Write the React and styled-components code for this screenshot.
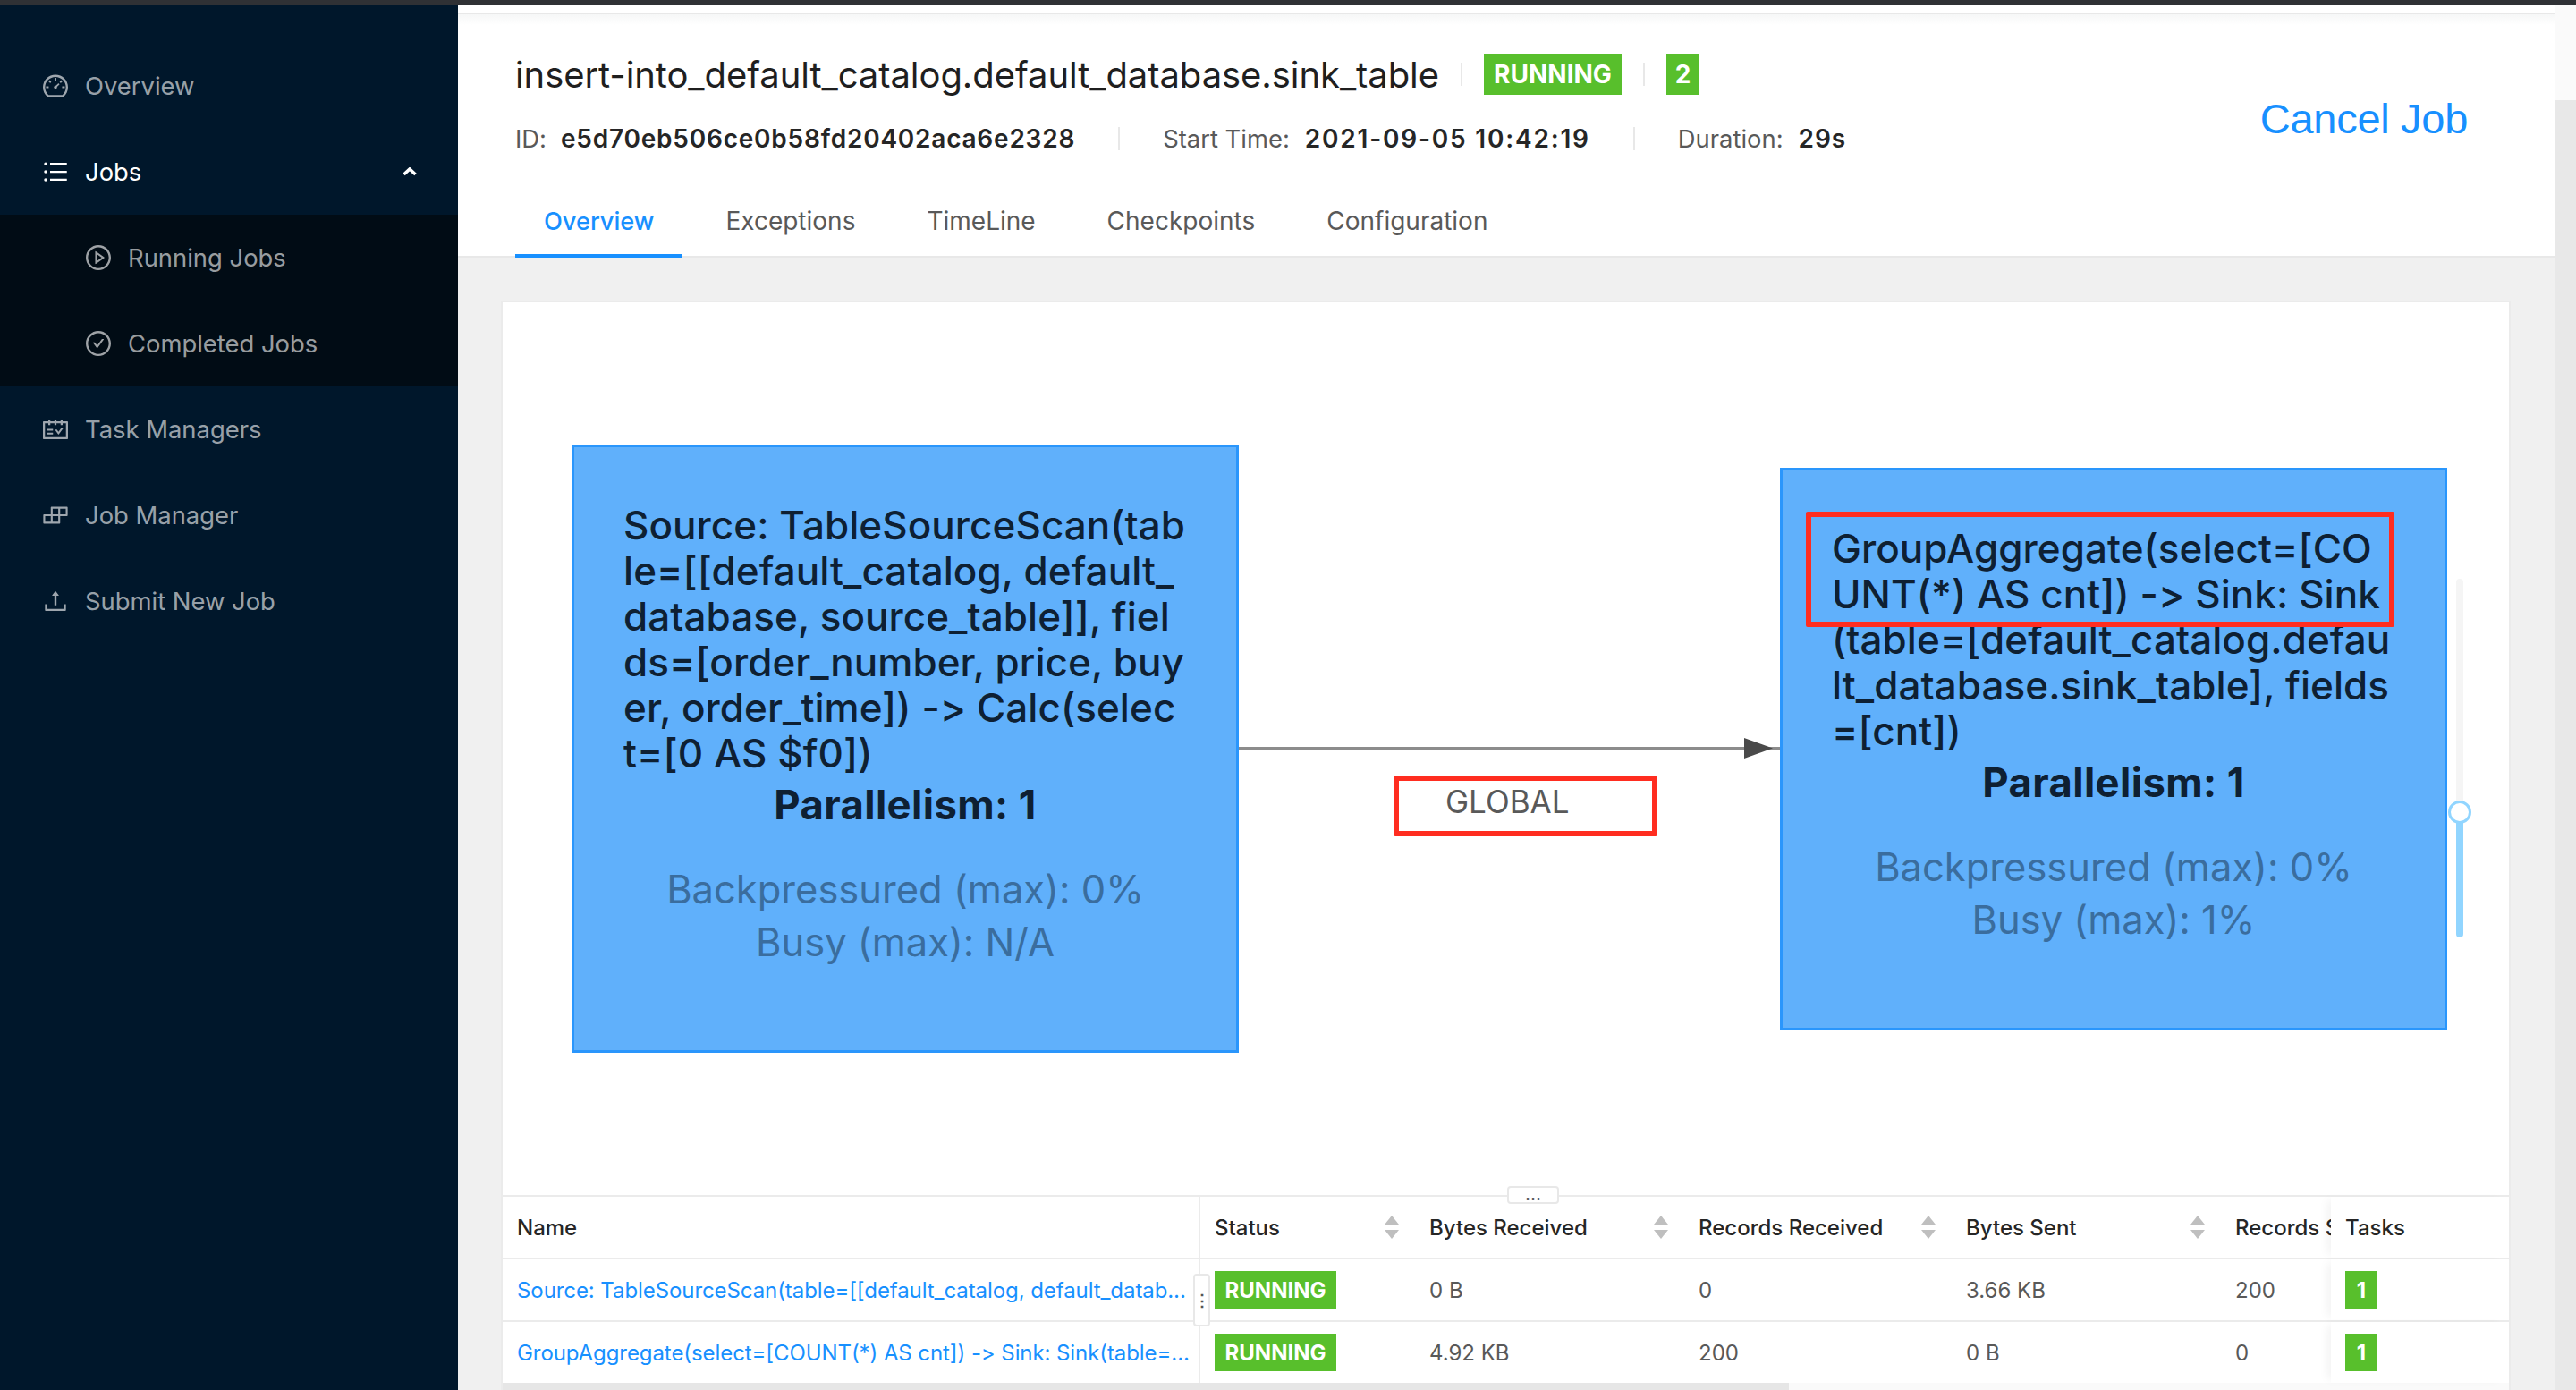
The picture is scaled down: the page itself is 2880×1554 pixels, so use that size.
import React from 'react';
import styled, { createGlobalStyle } from 'styled-components';
import {
  AiOutlineDashboard,
  AiOutlineUnorderedList,
  AiOutlinePlayCircle,
  AiOutlineCheckCircle,
  AiOutlineSchedule,
  AiOutlineBuild,
  AiOutlineUpload,
} from 'react-icons/ai';

const GlobalStyle = createGlobalStyle`
  html, body {
    margin: 0;
    padding: 0;
    height: 100%;
    overflow: hidden;
    background: #f0f0f0;
    font-family: Inter, "Liberation Sans", sans-serif;
    font-variant-ligatures: none;
    font-feature-settings: "calt" 0;
  }
  * {
    box-sizing: border-box;
  }
`;

const Page = styled.div`
  width: 2880px;
  height: 1554px;
  display: flex;
  flex-direction: column;
  overflow: hidden;
`;

const TopBar = styled.div`
  height: 6px;
  flex: none;
  background: #2f3135;
`;

const Body = styled.div`
  flex: 1;
  min-height: 0;
  display: flex;
`;

// sidebar

const Sidebar = styled.nav`
  width: 512px;
  flex: none;
  padding-top: 42px;
  background: #00172b;
`;

const MenuItem = styled.div`
  height: 96px;
  display: flex;
  align-items: center;
  gap: 17px;
  padding: 0 46px 0 ${(p) => (p.$sub ? 94 : 46)}px;
  font-size: 27.4px;
  color: ${(p) => (p.$active ? '#fff' : 'rgba(255, 255, 255, 0.62)')};
  svg {
    flex: none;
  }
`;

const MenuLabel = styled.span`
  flex: 1;
`;

const SubMenu = styled.div`
  background: #010c15;
`;

const ChevronUp = () => (
  <svg width="16" height="10" viewBox="0 0 16 10" fill="none">
    <polyline points="1.5,8 8,2 14.5,8" stroke="#fff" strokeWidth="3.6" />
  </svg>
);

// main column

const Main = styled.main`
  flex: 1;
  min-width: 0;
  display: flex;
  flex-direction: column;
`;

const HeaderStrip = styled.div`
  height: 10px;
  flex: none;
  background: #fff;
  border-bottom: 2px solid #e8e8e8;
`;

const Header = styled.header`
  flex: none;
  background: linear-gradient(#f6f7f7, #fff 12px);
  box-shadow: inset 0 -2px 0 #e8e8e8;
`;

const HeaderTop = styled.div`
  display: flex;
  justify-content: space-between;
  padding: 44px 97px 0 64px;
`;

const TitleRow = styled.div`
  height: 46px;
  display: flex;
  align-items: center;
`;

const Title = styled.h1`
  margin: 0;
  font-size: 40px;
  font-weight: 400;
  color: #1f1f1f;
  letter-spacing: -0.07px;
`;

const Divider = styled.span`
  width: 2px;
  height: ${(p) => p.$h || 26}px;
  margin: 0 ${(p) => p.$gap || 24}px;
  background: #e8e8e8;
`;

const Badge = styled.span`
  display: inline-flex;
  align-items: center;
  justify-content: center;
  background: #58bf2c;
  color: #fff;
  font-weight: 700;
  font-size: ${(p) => (p.$large ? 28 : 24)}px;
  height: ${(p) => (p.$large ? 46 : 42)}px;
  width: ${(p) => p.$w}px;
`;

const MetaRow = styled.div`
  height: 42px;
  margin-top: 28px;
  display: flex;
  align-items: center;
`;

const MetaLabel = styled.span`
  font-size: 27.4px;
  color: #595959;
  margin-right: ${(p) => p.$gap}px;
`;

const MetaValue = styled.span`
  font-size: 28px;
  font-weight: 600;
  color: #262626;
  letter-spacing: ${(p) => p.$spacing}px;
`;

const CancelLink = styled.a`
  margin-top: 45px;
  font-family: 'Liberation Sans', sans-serif;
  font-size: 47px;
  line-height: 56px;
  letter-spacing: -0.3px;
  color: #1890ff;
`;

const Tabs = styled.div`
  margin-top: 28px;
  padding-left: 64px;
  display: flex;
  gap: 16px;
`;

const Tab = styled.div`
  height: 84px;
  padding: 6px 32px 0;
  display: flex;
  align-items: center;
  font-size: ${(p) => (p.$active ? 27.2 : 28)}px;
  font-weight: ${(p) => (p.$active ? 500 : 400)};
  color: ${(p) => (p.$active ? '#1890ff' : '#595959')};
  border-bottom: 4px solid ${(p) => (p.$active ? '#1890ff' : 'transparent')};
`;

const Content = styled.div`
  flex: 1;
  min-height: 0;
  padding: 48px 49px 0 48px;
  background: #f0f0f0;
`;

const Card = styled.section`
  height: 100%;
  display: flex;
  flex-direction: column;
  background: #fff;
  border: 2px solid #ebebeb;
  border-bottom: 0;
  border-radius: 2px 2px 0 0;
`;

// plan graph

const Graph = styled.div`
  position: relative;
  flex: 1;
  min-height: 0;
`;

const PlanNode = styled.div`
  position: absolute;
  left: ${(p) => p.$left}px;
  top: ${(p) => p.$top}px;
  width: 746px;
  height: ${(p) => p.$height}px;
  padding: 62px 0 0 55px;
  background: #60b0fb;
  border: 3px solid #2a96fc;
`;

const NodeLine = styled.div`
  font-size: 44px;
  font-weight: 500;
  line-height: 51px;
  letter-spacing: 0.05px;
  white-space: pre;
  color: #0e2033;
`;

const NodeBlock = styled.div`
  margin-left: -55px;
  text-align: center;
`;

const NodeParallelism = styled(NodeBlock)`
  margin-top: 6px;
  font-size: 45.4px;
  line-height: 51px;
  font-weight: 700;
  letter-spacing: 0.4px;
  color: #0e2033;
`;

const NodeStats = styled(NodeBlock)`
  margin-top: 40px;
  font-size: 43.5px;
  line-height: 59px;
  color: #3a6d9e;
`;

const EdgeSvg = styled.svg`
  position: absolute;
  left: 823px;
  top: 486px;
`;

const Callout = styled.div`
  position: absolute;
  left: ${(p) => p.$left}px;
  top: ${(p) => p.$top}px;
  width: ${(p) => p.$w}px;
  height: ${(p) => p.$h}px;
  border: 6px solid #ff2d20;
  border-radius: 2px;
`;

const EdgeLabel = styled.span`
  display: block;
  padding-left: 52px;
  font-size: 35px;
  line-height: 46px;
  color: #595959;
`;

const ZoomSlider = styled.div`
  position: absolute;
  left: 2184px;
  top: 309px;
  width: 8px;
  height: 401px;
  border-radius: 4px;
  background: #f5f5f5;
`;

const ZoomFill = styled.div`
  position: absolute;
  left: 0;
  right: 0;
  bottom: 0;
  height: 140px;
  border-radius: 0 0 4px 4px;
  background: #91d5ff;
`;

const ZoomHandle = styled.div`
  position: absolute;
  left: -9px;
  bottom: 127px;
  width: 26px;
  height: 26px;
  border-radius: 50%;
  background: #fff;
  border: 3px solid #91d5ff;
`;

// vertex table

const TableWrap = styled.div`
  position: relative;
  flex: none;
`;

const Row = styled.div`
  display: grid;
  grid-template-columns: 780px 240px 301px 299px 301px 123px 198px;
  height: ${(p) => p.$height}px;
  border-top: ${(p) => (p.$top ? '2px solid #ebebeb' : 'none')};
  border-bottom: ${(p) => (p.$noBorder ? 'none' : '2px solid #ebebeb')};
`;

const Cell = styled.div`
  display: flex;
  align-items: center;
  justify-content: space-between;
  min-width: 0;
  overflow: hidden;
  white-space: nowrap;
  padding: 0 0 0 16px;
  font-size: 24px;
  color: #595959;
  border-right: ${(p) => (p.$divided ? '2px solid #ebebeb' : 'none')};
`;

const HeadCell = styled(Cell)`
  font-weight: 500;
  color: #262626;
  padding-right: 18px;
`;

const StickyCell = styled(Cell)`
  position: relative;
  background: #fff;
  overflow: visible;
  box-shadow: -8px 0 10px -4px rgba(0, 0, 0, 0.05);
`;

const StickyHead = styled(StickyCell)`
  font-weight: 500;
  color: #262626;
`;

const NameLink = styled.a`
  color: #1890ff;
  letter-spacing: -0.08px;
`;

const ResizeHandle = styled.div`
  position: absolute;
  left: ${(p) => p.$left}px;
  top: ${(p) => p.$top}px;
  width: ${(p) => p.$w}px;
  height: ${(p) => p.$h}px;
  display: flex;
  align-items: center;
  justify-content: center;
  background: #fff;
  border: 2px solid #e8e8e8;
  border-radius: 4px;
  font-size: 18px;
  font-weight: 700;
  line-height: 1;
  color: #555;
`;

const ScrollTrack = styled.div`
  height: 8px;
  background: #fafafa;
`;

const ScrollThumb = styled.div`
  width: 1438px;
  height: 100%;
  background: #e6e6e6;
`;

const PageScroll = styled.div`
  width: 24px;
  flex: none;
  display: flex;
  flex-direction: column;
  background: #e8e8e8;
`;

const PageScrollTop = styled.div`
  height: 106px;
  background: #fafafa;
`;

const SortIcon = () => (
  <svg width="16" height="26" viewBox="0 0 16 26" style={{ flex: 'none' }}>
    <polygon points="8,0 16,10 0,10" fill="#bfbfbf" />
    <polygon points="0,16 16,16 8,26" fill="#bfbfbf" />
  </svg>
);

const sourceLines = [
  'Source: TableSourceScan(tab',
  'le=[[default_catalog, default_',
  'database, source_table]], fiel',
  'ds=[order_number, price, buy',
  'er, order_time]) -> Calc(selec',
  't=[0 AS $f0])',
];

const sinkLines = [
  'GroupAggregate(select=[CO',
  'UNT(*) AS cnt]) -> Sink: Sink',
  '(table=[default_catalog.defau',
  'lt_database.sink_table], fields',
  '=[cnt])',
];

const lowerMenu = [
  { icon: AiOutlineSchedule, label: 'Task Managers' },
  { icon: AiOutlineBuild, label: 'Job Manager' },
  { icon: AiOutlineUpload, label: 'Submit New Job' },
];

const columns = ['Status', 'Bytes Received', 'Records Received', 'Bytes Sent', 'Records Sent'];

const vertices = [
  {
    name: 'Source: TableSourceScan(table=[[default_catalog, default_datab...',
    received: '0 B',
    recordsIn: '0',
    sent: '3.66 KB',
    recordsOut: '200',
  },
  {
    name: 'GroupAggregate(select=[COUNT(*) AS cnt]) -> Sink: Sink(table=...',
    received: '4.92 KB',
    recordsIn: '200',
    sent: '0 B',
    recordsOut: '0',
  },
];

export default function App() {
  return (
    <Page>
      <GlobalStyle />
      <TopBar />
      <Body>
        <Sidebar>
          <MenuItem>
            <AiOutlineDashboard size={32} />
            <MenuLabel>Overview</MenuLabel>
          </MenuItem>
          <MenuItem $active>
            <AiOutlineUnorderedList size={32} />
            <MenuLabel>Jobs</MenuLabel>
            <ChevronUp />
          </MenuItem>
          <SubMenu>
            <MenuItem $sub>
              <AiOutlinePlayCircle size={32} />
              <MenuLabel>Running Jobs</MenuLabel>
            </MenuItem>
            <MenuItem $sub>
              <AiOutlineCheckCircle size={32} />
              <MenuLabel>Completed Jobs</MenuLabel>
            </MenuItem>
          </SubMenu>
          {lowerMenu.map(({ icon: Icon, label }) => (
            <MenuItem key={label}>
              <Icon size={32} />
              <MenuLabel>{label}</MenuLabel>
            </MenuItem>
          ))}
        </Sidebar>

        <Main>
          <HeaderStrip />
          <Header>
            <HeaderTop>
              <div>
                <TitleRow>
                  <Title>insert-into_default_catalog.default_database.sink_table</Title>
                  <Divider />
                  <Badge $large $w={154}>RUNNING</Badge>
                  <Divider />
                  <Badge $large $w={37}>2</Badge>
                </TitleRow>
                <MetaRow>
                  <MetaLabel $gap={16}>ID:</MetaLabel>
                  <MetaValue $spacing={0.78}>e5d70eb506ce0b58fd20402aca6e2328</MetaValue>
                  <Divider $gap={48} />
                  <MetaLabel $gap={17}>Start Time:</MetaLabel>
                  <MetaValue $spacing={1.8}>2021-09-05 10:42:19</MetaValue>
                  <Divider $gap={48} />
                  <MetaLabel $gap={17}>Duration:</MetaLabel>
                  <MetaValue $spacing={0.9}>29s</MetaValue>
                </MetaRow>
              </div>
              <CancelLink>Cancel Job</CancelLink>
            </HeaderTop>
            <Tabs>
              <Tab $active>Overview</Tab>
              <Tab>Exceptions</Tab>
              <Tab>TimeLine</Tab>
              <Tab>Checkpoints</Tab>
              <Tab>Configuration</Tab>
            </Tabs>
          </Header>

          <Content>
            <Card>
              <Graph>
                <PlanNode $left={77} $top={159} $height={680}>
                  {sourceLines.map((line) => (
                    <NodeLine key={line}>{line}</NodeLine>
                  ))}
                  <NodeParallelism>Parallelism: 1</NodeParallelism>
                  <NodeStats>
                    Backpressured (max): 0%
                    <br />
                    Busy (max): N/A
                  </NodeStats>
                </PlanNode>

                <EdgeSvg width="605" height="24" viewBox="0 0 605 24">
                  <line x1="0" y1="12.5" x2="605" y2="12.5" stroke="#8c8c8c" strokeWidth="3" />
                  <polygon points="565,1 597,12.5 565,24" fill="#4a4a4a" />
                </EdgeSvg>

                <Callout $left={996} $top={529} $w={295} $h={68}>
                  <EdgeLabel>GLOBAL</EdgeLabel>
                </Callout>

                <PlanNode $left={1428} $top={185} $height={629}>
                  {sinkLines.map((line) => (
                    <NodeLine key={line}>{line}</NodeLine>
                  ))}
                  <NodeParallelism>Parallelism: 1</NodeParallelism>
                  <NodeStats>
                    Backpressured (max): 0%
                    <br />
                    Busy (max): 1%
                  </NodeStats>
                </PlanNode>

                <Callout $left={1457} $top={234} $w={658} $h={129} />

                <ZoomSlider>
                  <ZoomFill />
                  <ZoomHandle />
                </ZoomSlider>
              </Graph>

              <TableWrap>
                <Row $top $height={72}>
                  <HeadCell $divided>Name</HeadCell>
                  {columns.map((col) => (
                    <HeadCell key={col}>
                      {col}
                      {col !== 'Records Sent' && <SortIcon />}
                    </HeadCell>
                  ))}
                  <StickyHead>Tasks</StickyHead>
                </Row>
                {vertices.map((v, i) => (
                  <Row key={v.name} $height={i === 0 ? 70 : 68} $noBorder={i === 1}>
                    <Cell $divided>
                      <NameLink>{v.name}</NameLink>
                    </Cell>
                    <Cell>
                      <Badge $w={136}>RUNNING</Badge>
                    </Cell>
                    <Cell>{v.received}</Cell>
                    <Cell>{v.recordsIn}</Cell>
                    <Cell>{v.sent}</Cell>
                    <Cell>{v.recordsOut}</Cell>
                    <StickyCell>
                      <Badge $w={36}>1</Badge>
                    </StickyCell>
                  </Row>
                ))}
                <ResizeHandle $left={1123} $top={-10} $w={58} $h={20}>...</ResizeHandle>
                <ResizeHandle $left={772} $top={88} $w={19} $h={59}>⋮</ResizeHandle>
                <ScrollTrack>
                  <ScrollThumb />
                </ScrollTrack>
              </TableWrap>
            </Card>
          </Content>
        </Main>

        <PageScroll>
          <PageScrollTop />
        </PageScroll>
      </Body>
    </Page>
  );
}
